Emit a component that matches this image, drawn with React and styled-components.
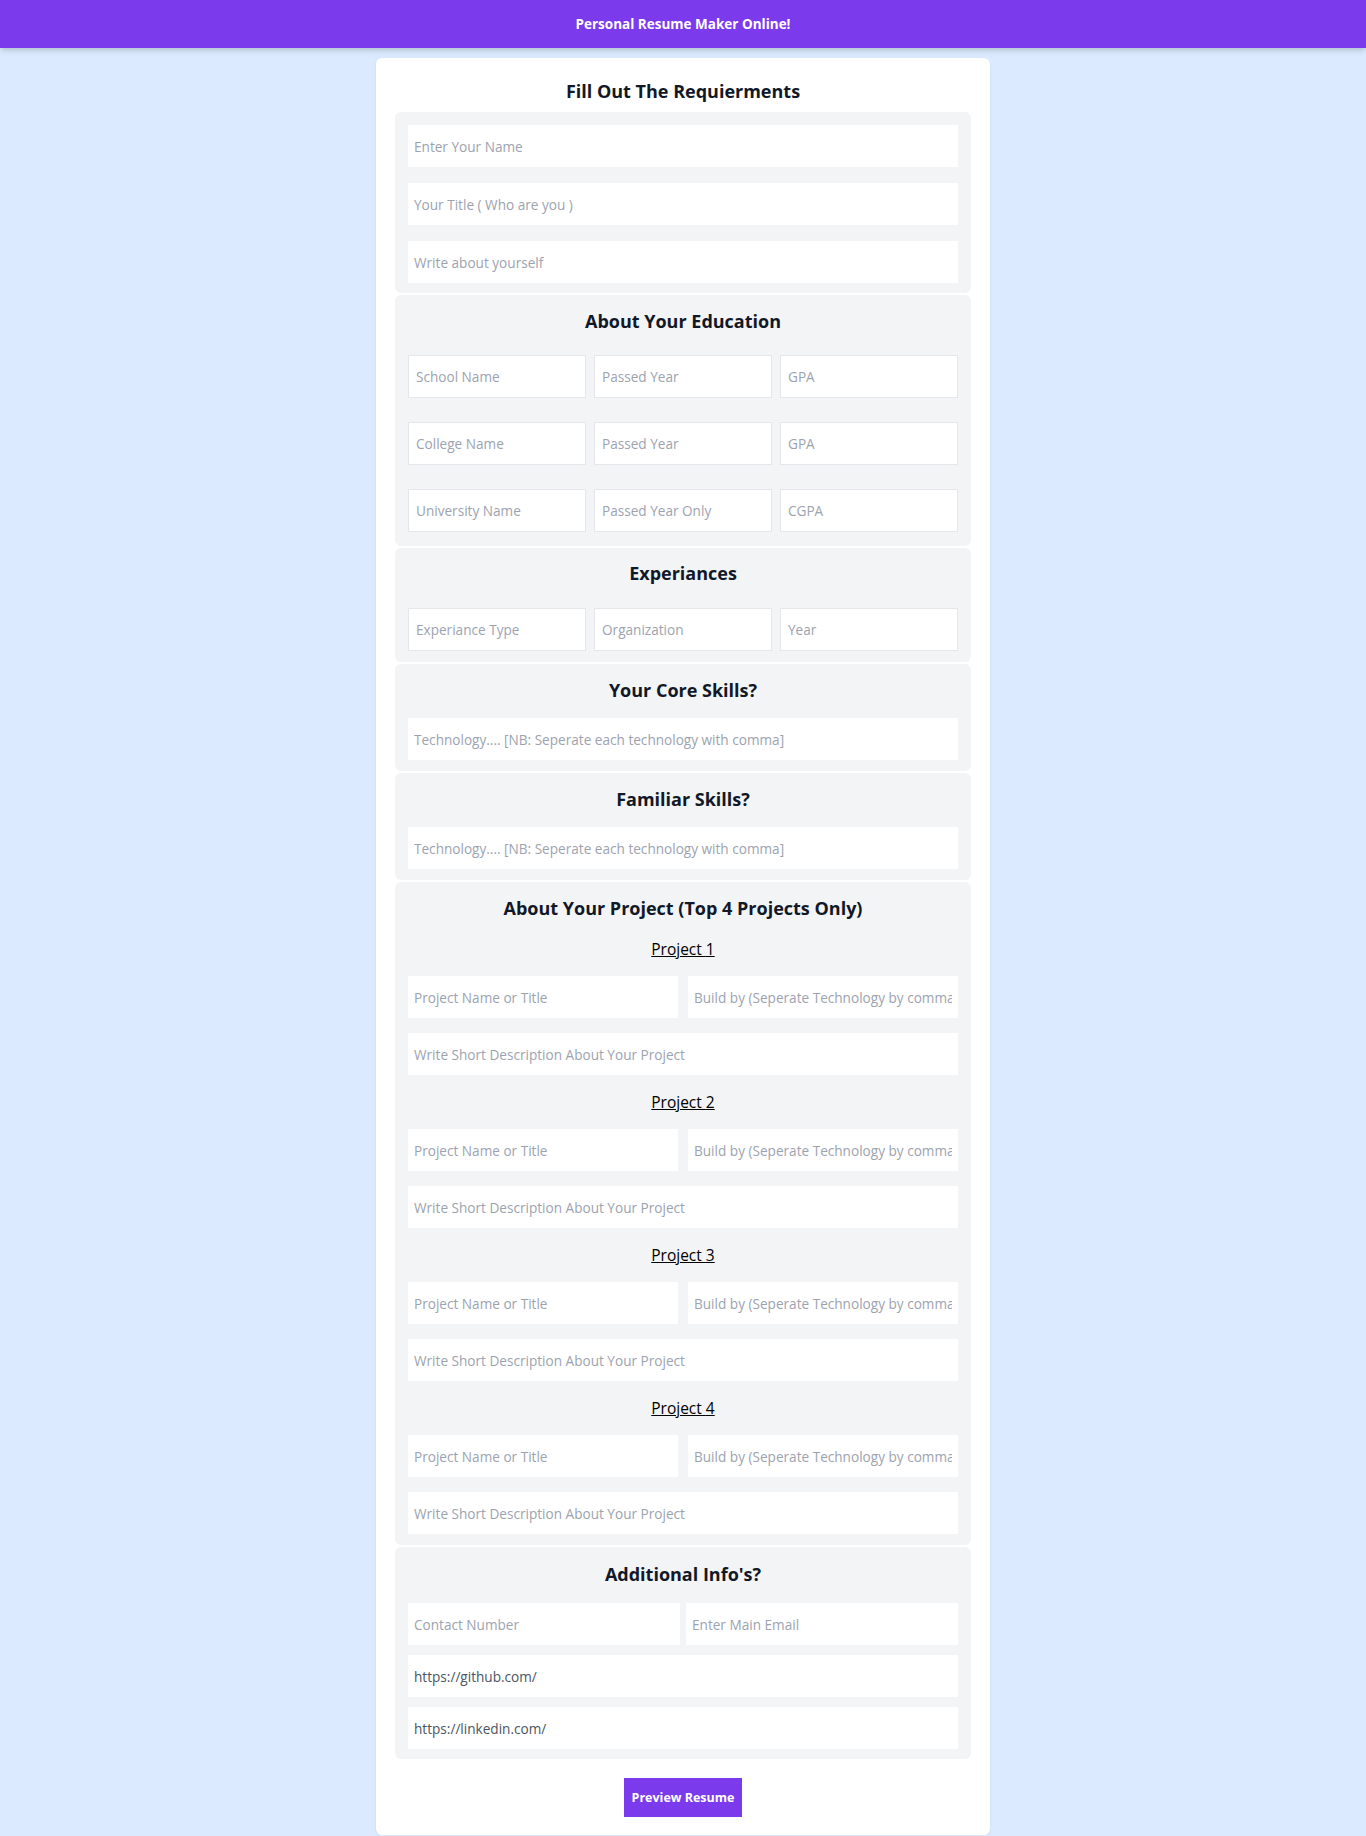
import React from "react";
import styled, { createGlobalStyle } from "styled-components";

const GlobalStyle = createGlobalStyle`
  * { box-sizing: border-box; }
  body {
    margin: 0;
    background: #dbeafe;
    font-family: "Open Sans", "Noto Sans", sans-serif;
    color: #111827;
  }
`;

const projects = [1, 2, 3, 4];

function App() {
  return (
    <>
      <GlobalStyle />
      <Header>Personal Resume Maker Online!</Header>
      <Main>
        <Card>
          <Title>Fill Out The Requierments</Title>

          <Section $pad="13px 13px 10px">
            <Stack $gap="16px">
              <Input placeholder="Enter Your Name" />
              <Input placeholder="Your Title ( Who are you )" />
              <Input placeholder="Write about yourself" />
            </Stack>
          </Section>

          <Section $pad="12px 13px 14px">
            <Heading $mb="20px">About Your Education</Heading>
            <Stack $gap="24px">
              <Row $cols={3} $gap="8px">
                <Input $bordered placeholder="School Name" />
                <Input $bordered placeholder="Passed Year" />
                <Input $bordered placeholder="GPA" />
              </Row>
              <Row $cols={3} $gap="8px">
                <Input $bordered placeholder="College Name" />
                <Input $bordered placeholder="Passed Year" />
                <Input $bordered placeholder="GPA" />
              </Row>
              <Row $cols={3} $gap="8px">
                <Input $bordered placeholder="University Name" />
                <Input $bordered placeholder="Passed Year Only" />
                <Input $bordered placeholder="CGPA" />
              </Row>
            </Stack>
          </Section>

          <Section $pad="11px 13px 11px">
            <Heading $mb="21px">Experiances</Heading>
            <Row $cols={3} $gap="8px">
              <Input $bordered placeholder="Experiance Type" />
              <Input $bordered placeholder="Organization" />
              <Input $bordered placeholder="Year" />
            </Row>
          </Section>

          <Section $pad="12px 13px 11px">
            <Heading $mb="14px">Your Core Skills?</Heading>
            <Input placeholder="Technology.... [NB: Seperate each technology with comma]" />
          </Section>

          <Section $pad="12px 13px 11px">
            <Heading $mb="14px">Familiar Skills?</Heading>
            <Input placeholder="Technology.... [NB: Seperate each technology with comma]" />
          </Section>

          <Section $pad="12px 13px 11px">
            <Heading $mb="0">About Your Project (Top 4 Projects Only)</Heading>
            {projects.map((n) => (
              <ProjectBlock key={n}>
                <ProjectLabel>Project {n}</ProjectLabel>
                <Stack $gap="15px">
                  <Row $cols={2} $gap="10px">
                    <Input placeholder="Project Name or Title" />
                    <Input placeholder="Build by (Seperate Technology by comma)" />
                  </Row>
                  <Input placeholder="Write Short Description About Your Project" />
                </Stack>
              </ProjectBlock>
            ))}
          </Section>

          <Section $pad="13px 13px 10px">
            <Heading $mb="15px">Additional Info's?</Heading>
            <Stack $gap="10px">
              <Row $cols={2} $gap="6px">
                <Input placeholder="Contact Number" />
                <Input placeholder="Enter Main Email" />
              </Row>
              <Input defaultValue="https://github.com/" />
              <Input defaultValue="https://linkedin.com/" />
            </Stack>
          </Section>

          <ButtonWrap>
            <PreviewButton>Preview Resume</PreviewButton>
          </ButtonWrap>
        </Card>
      </Main>
    </>
  );
}

export default App;

const Header = styled.header`
  position: relative;
  z-index: 2;
  height: 48px;
  background: #7c3aed;
  color: #ffffff;
  font-size: 13.5px;
  font-weight: 700;
  display: flex;
  align-items: center;
  justify-content: center;
  box-shadow: 0 4px 6px -1px rgba(0, 0, 0, 0.12), 0 2px 4px -1px rgba(0, 0, 0, 0.08);
`;

const Main = styled.main`
  display: flex;
  justify-content: center;
  padding-top: 10px;
`;

const Card = styled.div`
  width: 614px;
  background: #ffffff;
  border-radius: 6px;
  padding: 19px 19px 18px;
  box-shadow: 0 1px 3px rgba(0, 0, 0, 0.08);
`;

const Title = styled.h2`
  margin: 0 0 7px;
  font-size: 18px;
  line-height: 28px;
  font-weight: 700;
  text-align: center;
  color: #111827;
`;

const Section = styled.section`
  background: #f3f4f6;
  border-radius: 6px;
  padding: ${(p) => p.$pad};
  margin-bottom: 2px;
`;

const Heading = styled.h3`
  margin: 0 0 ${(p) => p.$mb};
  font-size: 18px;
  line-height: 28px;
  font-weight: 700;
  text-align: center;
  color: #111827;
`;

const Stack = styled.div`
  display: flex;
  flex-direction: column;
  gap: ${(p) => p.$gap};
`;

const Row = styled.div`
  display: grid;
  grid-template-columns: repeat(${(p) => p.$cols}, 1fr);
  gap: ${(p) => p.$gap};
`;

const Input = styled.input`
  display: block;
  width: 100%;
  min-width: 0;
  height: ${(p) => (p.$bordered ? "43px" : "42px")};
  padding: 0 ${(p) => (p.$bordered ? "7px" : "6px")};
  border: ${(p) => (p.$bordered ? "1px solid #e5e7eb" : "none")};
  background: #ffffff;
  font-family: inherit;
  font-size: 13.6px;
  color: #4b5563;
  outline: none;
  &::placeholder {
    color: #9ca3af;
  }
`;

const ProjectBlock = styled.div`
  margin-top: 15px;
  & + & {
    margin-top: 15px;
  }
`;

const ProjectLabel = styled.div`
  font-size: 15.5px;
  line-height: 24px;
  font-weight: 500;
  text-align: center;
  text-decoration: underline;
  color: #000000;
  margin-bottom: 15px;
`;

const ButtonWrap = styled.div`
  display: flex;
  justify-content: center;
  margin-top: 19px;
`;

const PreviewButton = styled.button`
  width: 118px;
  height: 39px;
  padding: 0;
  border: none;
  background: #7c3aed;
  color: #ffffff;
  font-family: inherit;
  font-size: 12.5px;
  font-weight: 700;
  white-space: nowrap;
  cursor: pointer;
`;
